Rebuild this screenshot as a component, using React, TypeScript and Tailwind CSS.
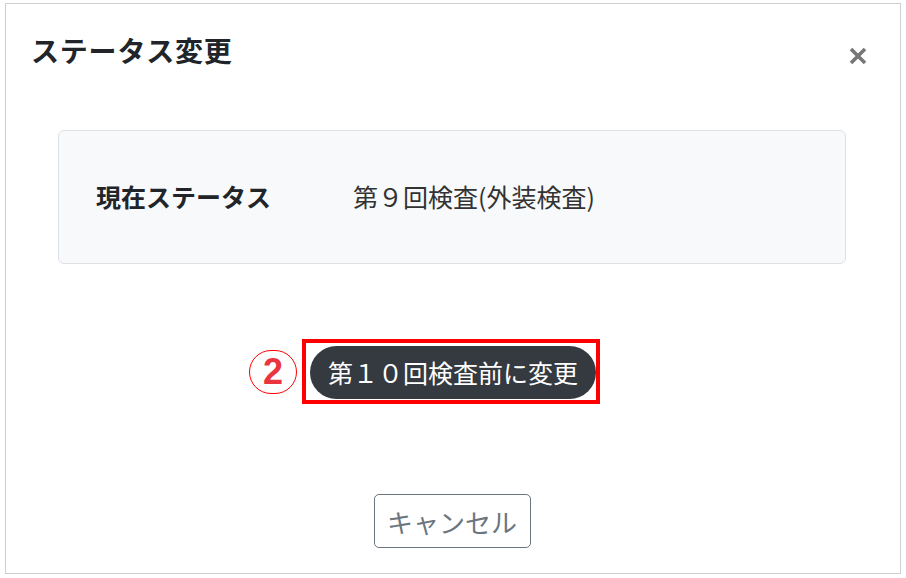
export default function App() {
  return (
    <div className="w-[906px] h-[578px] bg-white pt-[3px] pl-[5px]" style={{ fontFamily: '"Noto Sans CJK JP", "Noto Sans", sans-serif' }}>
      <div className="w-[896px] h-[571px] border border-[#cfcfcf] flex flex-col">
        <div className="flex justify-between items-start pl-[25px] pr-[32px] pt-[26px]">
          <h2 className="text-[28px] leading-[40px] font-bold text-[#212529] tracking-[0.8px]">ステータス変更</h2>
          <button className="mt-[17px]">
            <svg width="20" height="18" viewBox="0 0 20 18">
              <path d="M3 2 L17 16 M17 2 L3 16" stroke="#777" strokeWidth="3.6" strokeLinecap="butt" />
            </svg>
          </button>
        </div>

        <div className="ml-[52px] mr-[54px] mt-[60px] h-[134px] bg-[#f8f9fa] border border-[#dee2e6] rounded-[6px] flex items-center pl-[37px]">
          <span className="w-[257px] text-[25px] font-bold text-[#212529]">現在ステータス</span>
          <span className="text-[25px] text-[#333]">第９回検査(外装検査)</span>
        </div>

        <div className="flex justify-center mt-[75px] pr-[4px]">
          <div className="relative border-[4px] border-[#ff0000] pl-[4px] pt-[3px] pb-[1px]">
            <div className="absolute right-full mr-[9px] top-1/2 -translate-y-1/2 w-[48px] h-[44px] rounded-full border-[1.5px] border-[#ff0000] flex items-center justify-center">
              <span className="text-[36px] font-bold text-[#ea3440] leading-none" style={{ fontFamily: '"Liberation Sans", sans-serif' }}>2</span>
            </div>
            <button className="w-[286px] h-[53px] rounded-full bg-[#343a40] text-white text-[25px] leading-none">
              第１０回検査前に変更
            </button>
          </div>
        </div>

        <div className="flex justify-center mt-[90px] pr-[2px]">
          <button className="w-[157px] h-[54px] border border-[#6c757d] rounded-[5px] text-[#6c757d] text-[26px]">
            キャンセル
          </button>
        </div>
      </div>
    </div>
  )
}
